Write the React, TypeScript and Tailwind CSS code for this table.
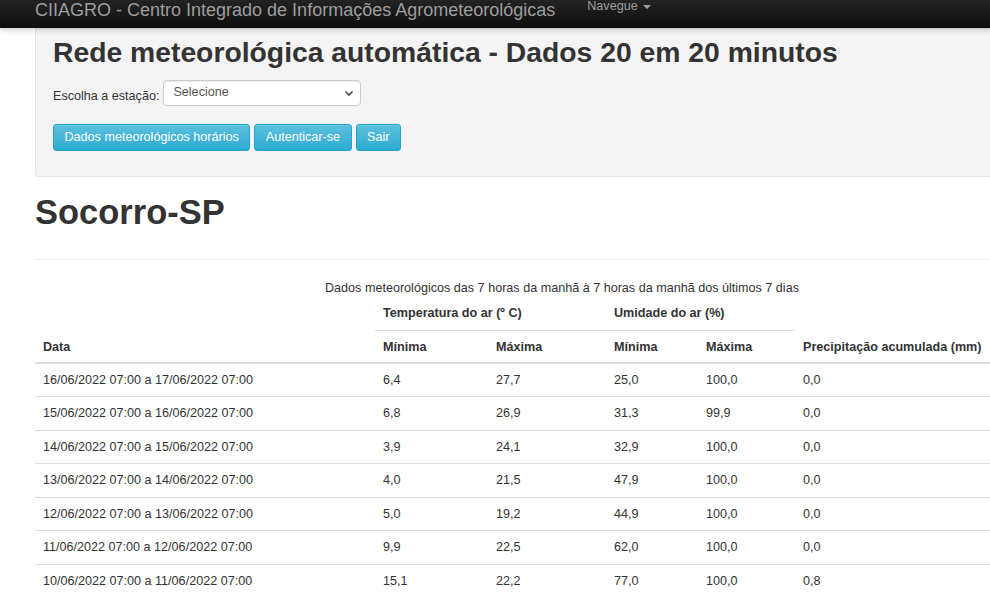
const rows = [
  ["16/06/2022 07:00 a 17/06/2022 07:00", "6,4", "27,7", "25,0", "100,0", "0,0"],
  ["15/06/2022 07:00 a 16/06/2022 07:00", "6,8", "26,9", "31,3", "99,9", "0,0"],
  ["14/06/2022 07:00 a 15/06/2022 07:00", "3,9", "24,1", "32,9", "100,0", "0,0"],
  ["13/06/2022 07:00 a 14/06/2022 07:00", "4,0", "21,5", "47,9", "100,0", "0,0"],
  ["12/06/2022 07:00 a 13/06/2022 07:00", "5,0", "19,2", "44,9", "100,0", "0,0"],
  ["11/06/2022 07:00 a 12/06/2022 07:00", "9,9", "22,5", "62,0", "100,0", "0,0"],
  ["10/06/2022 07:00 a 11/06/2022 07:00", "15,1", "22,2", "77,0", "100,0", "0,8"],
];

const btn =
  "h-[27px] px-[10.5px] rounded-[3px] border border-[#28a4c9] bg-gradient-to-b from-[#5bc0de] to-[#2aabd2] text-white text-[12.6px] leading-none shadow-[inset_0_1px_0_rgba(255,255,255,0.15)]";

export default function App() {
  return (
    <div className="w-[990px] h-[609px] overflow-hidden bg-white text-[#333] font-['Liberation_Sans',Arial,sans-serif] text-[12.6px]">
      {/* navbar */}
      <div className="relative z-10 h-[28px] bg-gradient-to-b from-[#232323] to-[#0e0e0e] shadow-[0_2px_6px_rgba(0,0,0,0.2)] flex items-start">
        <div className="ml-[35px] mt-[-2px] text-[18px] leading-[24px] text-[#9d9d9d]">
          CIIAGRO - Centro Integrado de Informações Agrometeorológicas
        </div>
        <div className="ml-[32px] mt-[-3px] flex items-center gap-[5px] text-[12.6px] leading-[18px] text-[#9d9d9d]">
          Navegue
          <span className="inline-block w-0 h-0 border-l-[4px] border-r-[4px] border-t-[4px] border-l-transparent border-r-transparent border-t-[#9d9d9d] mt-[1px]" />
        </div>
      </div>

      <div className="pl-[35px] w-[1089px]">
        {/* well */}
        <div className="h-[149px] bg-[#f4f4f4] border border-t-0 border-[#e3e3e3] rounded-bl-[4px] pl-[17px] pt-[7px] shadow-[inset_0_1px_1px_rgba(0,0,0,0.05)]">
          <h2 className="text-[28.3px] leading-[34px] font-bold text-[#333]">
            Rede meteorológica automática - Dados 20 em 20 minutos
          </h2>
          <div className="mt-[11px] flex items-end gap-[4px]">
            <span className="leading-[18px] mb-[1px]">Escolha a estação:</span>
            <div className="w-[198px] h-[26px] bg-white border border-[#ccc] rounded-[4px] flex items-center justify-between pl-[9px] pr-[6px] shadow-[inset_0_1px_1px_rgba(0,0,0,0.075)]">
              <span className="text-[#555] mt-[-1px]">Selecione</span>
              <svg width="10" height="10" viewBox="0 0 10 10" fill="none">
                <path d="M1.5 3.5 L5 7 L8.5 3.5" stroke="#444" strokeWidth="1.6" />
              </svg>
            </div>
          </div>
          <div className="mt-[18px] flex gap-[4px]">
            <button className={btn}>Dados meteorológicos horários</button>
            <button className={btn}>Autenticar-se</button>
            <button className={btn}>Sair</button>
          </div>
        </div>

        <h1 className="mt-[15px] text-[34.5px] leading-[40px] font-bold text-[#333]">Socorro-SP</h1>
        <hr className="mt-[27px] border-0 border-t border-[#eee]" />

        {/* table */}
        <div className="mt-[19px] text-center leading-[18px]">
          Dados meteorológicos das 7 horas da manhã à 7 horas da manhã dos últimos 7 dias
        </div>
        <table className="w-[1054px] border-collapse text-left leading-[18px] mt-[3px]">
          <colgroup>
            <col className="w-[340px]" />
            <col className="w-[113px]" />
            <col className="w-[118px]" />
            <col className="w-[92px]" />
            <col className="w-[97px]" />
            <col />
          </colgroup>
          <thead>
            <tr>
              <th rowSpan={2} className="align-bottom px-[8px] pt-[7px] pb-[6px] border-b-2 border-[#ddd]">Data</th>
              <th colSpan={2} className="px-[8px] pt-[4px] pb-[8px] border-b border-[#ddd]">Temperatura do ar (º C)</th>
              <th colSpan={2} className="px-[8px] pt-[4px] pb-[8px] border-b border-[#ddd]">Umidade do ar (%)</th>
              <th rowSpan={2} className="align-bottom px-[8px] pt-[7px] pb-[6px] border-b-2 border-[#ddd]">Precipitação acumulada (mm)</th>
            </tr>
            <tr>
              <th className="px-[8px] pt-[7px] pb-[6px] border-b-2 border-[#ddd]">Mínima</th>
              <th className="px-[8px] pt-[7px] pb-[6px] border-b-2 border-[#ddd]">Máxima</th>
              <th className="px-[8px] pt-[7px] pb-[6px] border-b-2 border-[#ddd]">Mínima</th>
              <th className="px-[8px] pt-[7px] pb-[6px] border-b-2 border-[#ddd]">Máxima</th>
            </tr>
          </thead>
          <tbody>
            {rows.map((r) => (
              <tr key={r[0]} className="border-b border-[#ddd] last:border-b-0">
                {r.map((c, i) => (
                  <td key={i} className="px-[8px] py-[7px] h-[33.5px]">{c}</td>
                ))}
              </tr>
            ))}
          </tbody>
        </table>
      </div>
    </div>
  );
}
